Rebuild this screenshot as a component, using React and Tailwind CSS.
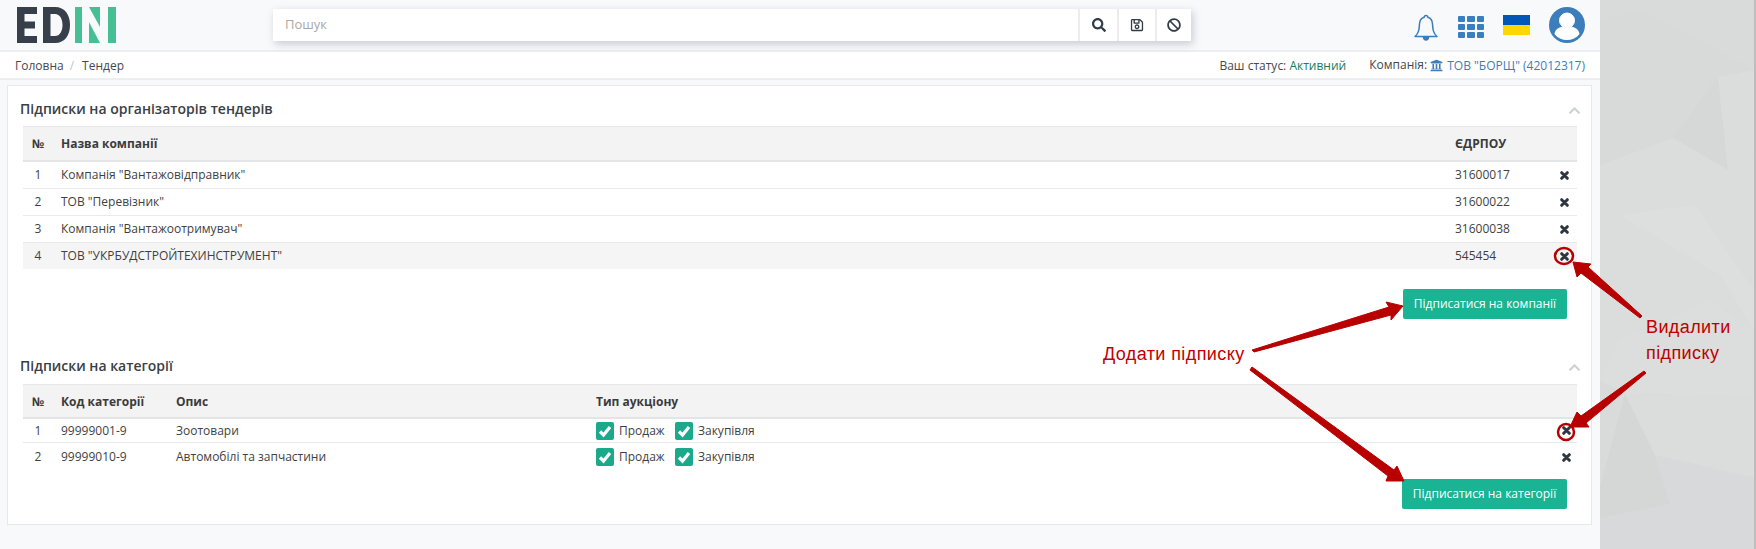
import React from "react";
import { FaSearch, FaRegSave, FaBan, FaChevronUp, FaUniversity } from "react-icons/fa";

const Check = () => (
  <span className="w-[18px] h-[18px] rounded-[2px] bg-[#1aa98a] block shrink-0">
    <svg width="18" height="18" viewBox="0 0 18 18" className="block">
      <path d="M4 9.500 L7.500 13 L14 5" fill="none" stroke="#fff" strokeWidth="3.200" />
    </svg>
  </span>
);

const Cross = () => (
  <svg width="9" height="9" viewBox="0 0 9 9" className="block">
    <path d="M1.700 1.700 L7.300 7.300 M7.300 1.700 L1.700 7.300" stroke="#2f3640" strokeWidth="3" strokeLinecap="round" />
  </svg>
);

const Logo = () => (
  <svg width="99" height="36" viewBox="0 0 99 36" className="block">
    <path d="M0 0H20V7H7.500V14.500H18V21.500H7.500V29H20V36H0Z" fill="#363f4a" />
    <path d="M26 0H38C48 0 53 8 53 18C53 28 48 36 38 36H26ZM33.500 7V29H38C43 29 45.500 24 45.500 18C45.500 12 43 7 38 7Z" fill="#363f4a" fillRule="evenodd" />
    <rect x="58" y="0" width="7" height="36" fill="#47bf95" />
    <polygon points="72,0 83,0 83,20" fill="#47bf95" />
    <polygon points="72,15 83,36 72,36" fill="#47bf95" />
    <rect x="91" y="0" width="8" height="36" fill="#47bf95" />
  </svg>
);

const Arrow = ({ pts }) => <polygon points={pts} fill="#b80000" stroke="#b80000" strokeWidth="1" strokeLinejoin="round" />;

const Row1 = ({ n, name, code, last }) => (
  <div className={`flex items-center ${last ? "h-[26px] bg-[#f5f5f5]" : "h-[27px] border-b border-[#e7eaec]"}`}>
    <span className="w-[30px] text-center text-[12px] text-[#3f3f3f]">{n}</span>
    <span className="ml-[8px] flex-1 text-[12px] text-[#3f3f3f]">{name}</span>
    <span className="w-[96px] text-[12px] text-[#3f3f3f]">{code}</span>
    <span className="w-[26px] flex justify-center"><Cross /></span>
  </div>
);

const Row2 = ({ n, code, desc, last }) => (
  <div className={`flex items-center ${last ? "h-[26px] pt-[2px]" : "h-[24px] border-b border-[#e7eaec]"}`}>
    <span className="w-[30px] text-center text-[12px] text-[#3f3f3f]">{n}</span>
    <span className="ml-[8px] w-[115px] text-[12px] text-[#3f3f3f]">{code}</span>
    <span className="w-[420px] text-[12px] text-[#3f3f3f]">{desc}</span>
    <span className="flex items-center flex-1 text-[12px] text-[#3f3f3f]">
      <Check />
      <span className="ml-[5px] w-[56px]">Продаж</span>
      <Check />
      <span className="ml-[5px]">Закупівля</span>
    </span>
    <span className="w-[18px] mr-[2px] flex justify-center"><Cross /></span>
  </div>
);

const Chevron = () => <span className="block text-[#cdd1d4]"><FaChevronUp size={13} /></span>;

export default function App() {
  return (
    <div className="relative flex w-full h-[549px] overflow-hidden font-['Open_Sans',sans-serif]">
      <main className="w-[1600px] h-[549px] bg-[#f8f9fb] shrink-0">
        <header className="h-[52px] border-b-2 border-[#eceef0] flex items-start">
          <div className="ml-[17px] mt-[7px]"><Logo /></div>
          <div className="ml-[157px] mt-[9px] w-[918px] h-[32px] bg-white flex shadow-[2px_3px_8px_rgba(90,95,120,0.3)]">
            <div className="flex-1 pl-[12px] flex items-center text-[13px] text-[#a9a9a9]">Пошук</div>
            <div className="w-[39px] border-l-2 border-[#ececec] flex items-center justify-center text-[#333d47]"><FaSearch size={14} /></div>
            <div className="w-[38px] border-l-2 border-[#ececec] flex items-center justify-center text-[#333d47]"><FaRegSave size={14} /></div>
            <div className="w-[36px] border-l-2 border-[#ececec] flex items-center justify-center text-[#333d47]"><FaBan size={14} /></div>
          </div>
          <div className="ml-[223px] mt-[14px]">
            <svg width="24" height="27" viewBox="0 0 24 27" fill="none" stroke="#3c7dbc" strokeWidth="1.500">
              <path d="M12 1.500C13.300 1.500 13.800 2.400 13.800 3.300C17 4.300 18.300 6.500 18.500 10C18.800 15 19 19 23 22.500H1C5 19 5.200 15 5.500 10C5.700 6.500 7 4.300 10.200 3.300C10.200 2.400 10.700 1.500 12 1.500Z" strokeLinejoin="round" />
              <path d="M9.500 23.500C9.800 26.700 14.200 26.700 14.500 23.500Z" fill="#3c7dbc" />
            </svg>
          </div>
          <div className="ml-[20px] mt-[16px] grid grid-cols-3 gap-[2px] w-[26px]">
            {Array.from({ length: 9 }).map((_, i) => (
              <span key={i} className="h-[6px] rounded-[1px] bg-[#3c7dbc]" />
            ))}
          </div>
          <div className="ml-[19px] mt-[15px] w-[27px] h-[20px] flex flex-col">
            <span className="h-[10px] bg-[#0057b8]" />
            <span className="h-[10px] bg-[#ffd700]" />
          </div>
          <div className="ml-[19px] mt-[7px]">
            <svg width="36" height="36" viewBox="0 0 36 36" className="block">
              <circle cx="18" cy="18" r="18" fill="#3c7dbc" />
              <circle cx="18" cy="13.500" r="7.500" fill="#fff" stroke="#fff" />
              <path d="M5.500 27C6 22 11 20 14 19.500C16 21.500 20 21.500 22 19.500C25 20 30 22 30.500 27C27.500 31 23 33 18 33C13 33 8.500 31 5.500 27Z" fill="#fff" />
            </svg>
          </div>
        </header>

        <div className="h-[28px] pt-[1px] bg-white border-b-2 border-[#eceef0] flex items-center text-[12px] text-[#45494f] pl-[15px] pr-[15px]">
          <span>Головна</span>
          <span className="ml-[6px] text-[#c4c4c4]">/</span>
          <span className="ml-[8px]">Тендер</span>
          <span className="ml-auto">Ваш статус: <span className="text-[#1f7a5c]">Активний</span></span>
          <span className="ml-[23px]">Компанія: <span className="text-[#3c7dbc] inline-flex items-center gap-[4px] align-middle"><FaUniversity size={13} /> ТОВ "БОРЩ" (42012317)</span></span>
        </div>

        <section className="ml-[7px] mt-[5px] w-[1585px] h-[440px] bg-white border border-[#e6e8eb] pt-[1px]">
          <div className="pl-[12px] pr-[7px] pt-[4px] h-[39px] flex items-center justify-between">
            <h2 className="text-[14px] font-semibold text-[#3b4046]">Підписки на організаторів тендерів</h2>
            <span className="mr-[3px] mt-[4px]"><Chevron /></span>
          </div>
          <div className="ml-[15px] mr-[14px]">
            <div className="h-[36px] flex items-center bg-[#f3f3f3] border-t border-[#e7e7e7] border-b-2 border-b-[#e2e4e6] text-[12px] font-bold text-[#3b3b3b]">
              <span className="w-[30px] text-center">№</span>
              <span className="ml-[8px] flex-1">Назва компанії</span>
              <span className="w-[122px]">ЄДРПОУ</span>
            </div>
            <Row1 n="1" name='Компанія "Вантажовідправник"' code="31600017" />
            <Row1 n="2" name='ТОВ "Перевізник"' code="31600022" />
            <Row1 n="3" name='Компанія "Вантажоотримувач"' code="31600038" />
            <Row1 n="4" name='ТОВ "УКРБУДСТРОЙТЕХИНСТРУМЕНТ"' code="545454" last />
            <div className="flex justify-end mt-[20px] pr-[10px]">
              <button className="w-[164px] h-[30px] rounded-[2px] bg-[#1ab394] text-white text-[12px]">Підписатися на компанії</button>
            </div>
          </div>
          <div className="pl-[12px] pr-[7px] mt-[34px] h-[24px] flex items-center justify-between">
            <h2 className="text-[14px] font-semibold text-[#3b4046]">Підписки на категорії</h2>
            <span className="mr-[3px] mt-[4px]"><Chevron /></span>
          </div>
          <div className="ml-[15px] mr-[14px] mt-[7px]">
            <div className="h-[35px] pt-[1px] flex items-center bg-[#f3f3f3] border-t border-[#e7e7e7] border-b-2 border-b-[#e2e4e6] text-[12px] font-bold text-[#3b3b3b]">
              <span className="w-[30px] text-center">№</span>
              <span className="ml-[8px] w-[115px]">Код категорії</span>
              <span className="w-[420px]">Опис</span>
              <span>Тип аукціону</span>
            </div>
            <Row2 n="1" code="99999001-9" desc="Зоотовари" />
            <Row2 n="2" code="99999010-9" desc="Автомобілі та запчастини" last />
            <div className="flex justify-end mt-[10px] pr-[10px]">
              <button className="w-[165px] h-[30px] rounded-[2px] bg-[#1ab394] text-white text-[12px]">Підписатися на категорії</button>
            </div>
          </div>
        </section>
      </main>

      <aside className="flex-1 bg-[#d9dada] border-r-2 border-[#bdbdbd] overflow-hidden">
        <svg width="154" height="549" viewBox="0 0 154 549" className="block">
          <polygon points="0,20 40,10 154,70 118,77 73,138 0,165" fill="#d8d9d9" />
          <polygon points="118,77 128,170 73,138" fill="#d6d7d7" />
          <polygon points="118,77 154,70 154,159 128,170" fill="#dbdcdc" />
          <polygon points="0,165 73,138 128,170 154,159 154,330 110,300 20,340 0,380" fill="#dbdcdc" />
          <polygon points="20,215 95,205 154,290 154,330 120,275" fill="#dddede" />
          <polygon points="0,380 20,340 110,300 154,330 154,396 25,394" fill="#dcdddd" />
          <polygon points="25,394 55,455 70,504 0,518 0,487" fill="#d5d6d6" />
          <polygon points="25,394 154,396 154,478 55,455" fill="#dbdcdc" />
          <polygon points="55,455 154,478 154,549 0,549 0,518 70,504" fill="#d8d9da" />
        </svg>
      </aside>

      <svg className="absolute inset-0 pointer-events-none" width="1756" height="549" viewBox="0 0 1756 549">
        <Arrow pts="1252,350 1389,307 1386,302 1403,306 1391,320 1391,315 1254,352" />
        <Arrow pts="1250,370 1252,367 1394,470 1397,466 1404,481 1386,481 1388,476" />
        <Arrow pts="1640,318 1642,316 1588,267 1591,264 1573,262 1577,277 1581,273" />
        <Arrow pts="1644,371 1646,373 1586,423 1589,427 1570,427 1577,412 1581,416" />
        <ellipse cx="1564" cy="256" rx="9" ry="8" fill="none" stroke="#b80000" strokeWidth="2.500" />
        <ellipse cx="1566" cy="432" rx="8" ry="8" fill="none" stroke="#b80000" strokeWidth="2.500" />
      </svg>
      <div className="absolute left-[1103px] top-[341px] font-['Liberation_Sans',sans-serif] text-[18px] tracking-[0.4px] leading-[26px] text-[#c00000] whitespace-nowrap">Додати підписку</div>
      <div className="absolute left-[1646px] top-[314px] font-['Liberation_Sans',sans-serif] text-[18px] tracking-[0.4px] leading-[26px] text-[#c00000]">Видалити<br />підписку</div>
    </div>
  );
}
